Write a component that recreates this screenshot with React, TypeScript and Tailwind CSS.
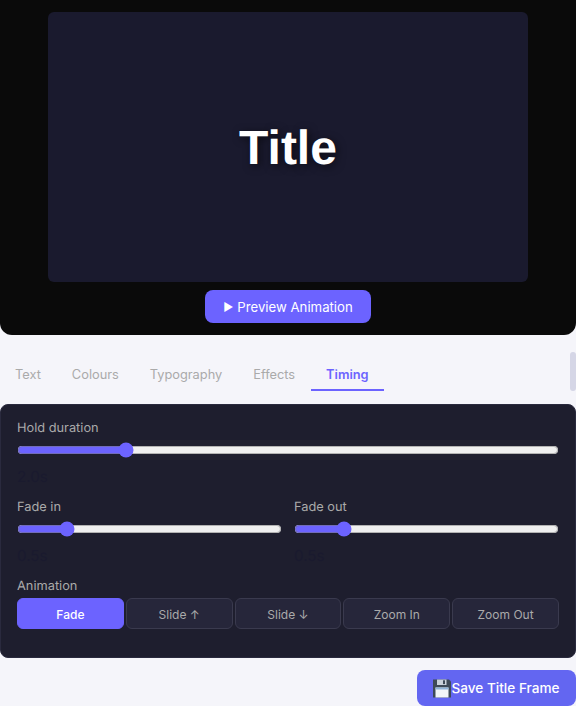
const TABS = ['Text', 'Colours', 'Typography', 'Effects', 'Timing']
const ANIMATIONS = ['Fade', 'Slide ↑', 'Slide ↓', 'Zoom In', 'Zoom Out']

function Slider({ label, value, min, max, display }: { label: string; value: number; min: number; max: number; display: string }) {
  return (
    <div className="flex-1 min-w-0">
      <label className="block text-[12.8px] leading-[20px] text-[#aaaaaa] mb-[1px]">{label}</label>
      <input
        type="range"
        min={min}
        max={max}
        step={0.1}
        defaultValue={value}
        className="block w-full m-0 h-[20px] accent-[#6c63ff]"
      />
      <div className="mt-[7px] text-[15.2px] leading-[20px] text-[#1a1a2e]">{display}</div>
    </div>
  )
}

function FloppyIcon() {
  return (
    <svg width="18" height="19" viewBox="0 0 18 19" className="shrink-0">
      <path d="M0 0.5h16L18 2.5v16H0z" fill="#3d4a57" />
      <rect x="4" y="0.5" width="9.5" height="5.5" fill="#c9d2da" />
      <rect x="10" y="1.3" width="2" height="3.8" fill="#3d4a57" />
      <rect x="2.5" y="8.5" width="13" height="10" fill="#f2f5f8" />
      <rect x="2.5" y="8.5" width="13" height="2" fill="#8fb4d8" />
    </svg>
  )
}

export default function App() {
  return (
    <div className="relative h-[706px] overflow-hidden bg-[#f5f5fa] font-['Inter',sans-serif] [text-rendering:geometricPrecision]">
      <div className="flex flex-col items-center h-[335px] pt-3 bg-[#0a0a0a] rounded-b-xl">
        <div className="flex items-center justify-center w-[480px] h-[270px] pt-[3px] rounded-md bg-[#1a1a2e]">
          <span className="font-['Liberation_Sans',sans-serif] font-bold text-[48px] text-white [text-shadow:2px_2px_8px_rgba(0,0,0,0.6)]">
            Title
          </span>
        </div>
        <button className="flex items-center justify-center gap-[4px] pt-[2px] mt-2 w-[166px] h-[33px] rounded-lg bg-[#6c63ff] text-[13.2px] text-white">
          <span className="text-[11px]">▶</span>
          Preview Animation
        </button>
      </div>

      <div className="absolute right-0 top-[352px] w-[6px] h-[39px] rounded-[3px] bg-[#d5d6e6]" />

      <div className="flex gap-[1px] mt-[18px] mb-[13px]">
        {TABS.map(t => (
          <button
            key={t}
            className={
              t === 'Timing'
                ? 'h-[38px] pt-[8px] px-[15px] text-[12.8px] font-semibold text-[#6c63ff] border-b-2 border-[#6c63ff]'
                : 'h-[38px] pt-[8px] px-[15px] text-[12.8px] text-[#aaaaaa] border-b-2 border-transparent'
            }
          >
            {t}
          </button>
        ))}
      </div>

      <div className="h-[254px] rounded-lg border border-[#2a2a3e] bg-[#1e1e2e] px-4 pt-[14px]">
        <Slider label="Hold duration" value={2} min={0.5} max={8.3} display="2.0s" />
        <div className="flex gap-3 mt-[11px]">
          <Slider label="Fade in" value={0.5} min={0} max={3} display="0.5s" />
          <Slider label="Fade out" value={0.5} min={0} max={3} display="0.5s" />
        </div>
        <div className="mt-[11px] text-[12.8px] leading-[20px] text-[#aaaaaa] mb-[1px]">Animation</div>
        <div className="flex gap-[2px]">
          {ANIMATIONS.map(a => (
            <button
              key={a}
              className={
                a === 'Fade'
                  ? 'flex-1 h-[31px] pt-[2px] rounded-md border border-[#6c63ff] bg-[#6c63ff] text-[12px] font-medium text-white'
                  : 'flex-1 h-[31px] pt-[2px] rounded-md border border-[#3a3a4e] bg-[#26263a] text-[12px] text-[#aaaaaa]'
              }
            >
              {a}
            </button>
          ))}
        </div>
      </div>

      <div className="flex justify-end mt-3">
        <button className="flex items-center justify-center w-[159px] h-[36px] rounded-lg bg-[#6366f1] text-[13.6px] font-medium text-white">
          <FloppyIcon />
          Save Title Frame
        </button>
      </div>
    </div>
  )
}
